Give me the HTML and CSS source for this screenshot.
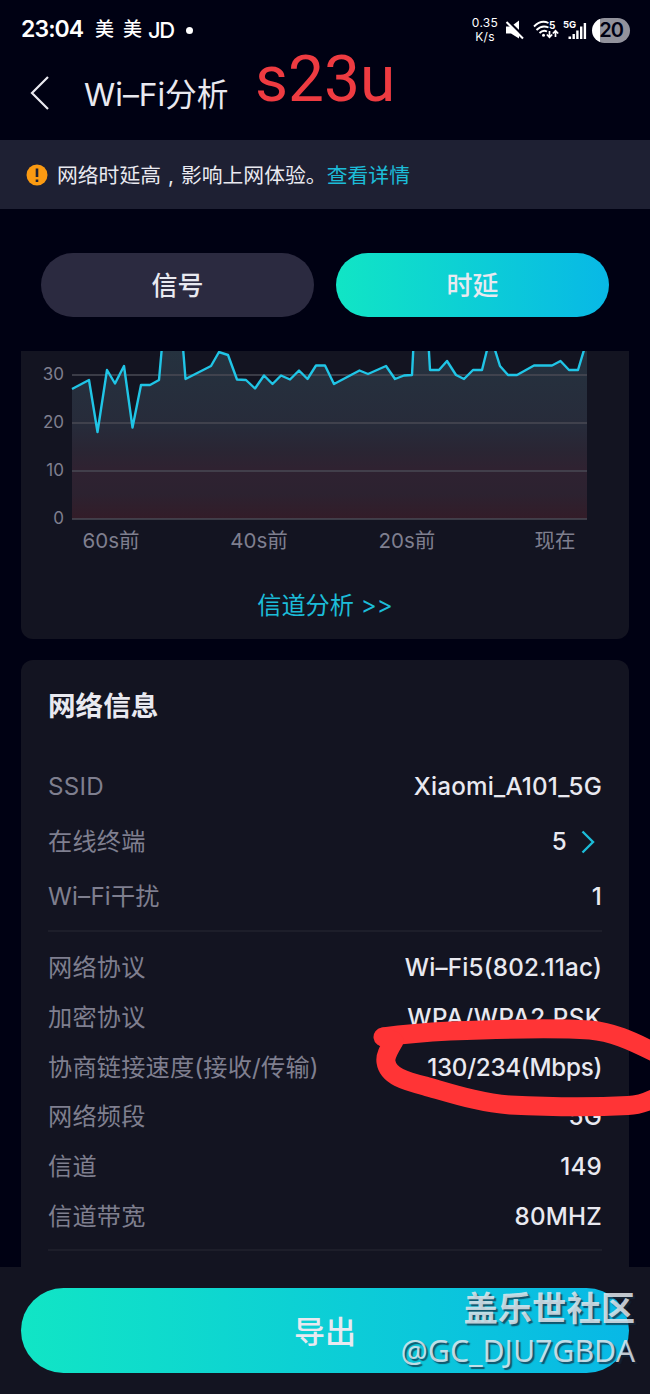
FILE: index.html
```html
<!DOCTYPE html>
<html lang="zh-CN">

<head>
  <meta charset="UTF-8" />
  <meta name="viewport" content="width=device-width, initial-scale=1.0" />
  <title>Wi-Fi分析</title>
  <link rel="stylesheet" href="styles.css">
</head>

<body>
  <div class="screen">
    <div class="status-bar">
      <span class="clock">23:04</span>
      <span class="notif">美</span>
      <span class="notif">美</span>
      <span class="notif-jd">JD</span>
      <span class="dot"></span>
      <div class="status-right">
        <div class="net-speed"><span>0.35</span><span>K/s</span></div>
        <svg class="mute" width="20" height="22" viewBox="0 0 20 22">
          <path d="M1 7.500h5l8-6v18l-8-5H1z" fill="#fff" />
          <path d="M1.500 0.500l18 17.500" stroke="#000113" stroke-width="2.500" />
          <path d="M1.500 3l16.500 16.500" stroke="#fff" stroke-width="2" />
        </svg>
        <svg class="wifi" width="26" height="22" viewBox="0 0 26 22">
          <g fill="none" stroke="#fff" stroke-width="1.9">
            <path d="M1 7.500Q8 0.500 15.500 4" />
            <path d="M3.500 11Q9 5.500 15.500 8.500" />
            <path d="M6.500 14Q10 10.500 14 12.500" />
            <path d="M16.500 12v6M13.800 15.500l2.700 2.700 2.700-2.700M22.500 18v-6M19.800 14.500l2.700-2.700 2.700 2.700" stroke-width="1.700" />
          </g>
          <circle cx="10.500" cy="16.300" r="1.500" fill="#fff" />
          <text x="16" y="9.500">5</text>
        </svg>
        <svg class="signal" width="24" height="22" viewBox="0 0 24 22">
          <text x="0" y="9">5G</text>
          <path d="M5.500 17.500h2.600V20H5.500zM9.500 15h2.400v5H9.500zM13.200 11.500h2.400V20h-2.400zM17 7.500h2.400V20H17zM20.700 4h2.400v16h-2.400z" fill="#fff" />
        </svg>
        <div class="battery">20</div>
      </div>
    </div>

    <header>
      <svg class="back" width="20" height="36" viewBox="0 0 20 36">
        <path d="M18 2L2 18l16 16" fill="none" stroke="#e9e9f0" stroke-width="2.200" />
      </svg>
      <h1>Wi–Fi分析</h1>
      <span class="scribble">s23u</span>
    </header>

    <div class="notice">
      <svg width="22" height="22" viewBox="0 0 22 22">
        <circle cx="11" cy="11" r="10.500" fill="#fb9a12" />
        <path d="M11 4.500v8.500M11 15.500v2.500" stroke="#1e2033" stroke-width="2.600" />
      </svg>
      <p>网络时延高<i>,</i>影响上网体验<i class="stop">。</i><a href="#">查看详情</a></p>
    </div>

    <div class="tabs">
      <button>信号</button>
      <button class="active">时延</button>
    </div>

    <main>
      <section class="card chart-card">
        <svg class="chart" width="608" height="210" viewBox="21 351 608 210">
          <defs>
            <linearGradient id="area" x1="0" y1="351" x2="0" y2="519" gradientUnits="userSpaceOnUse">
              <stop offset="0" stop-color="#25323f" />
              <stop offset="0.450" stop-color="#272b3a" />
              <stop offset="0.600" stop-color="#2a2533" />
              <stop offset="0.700" stop-color="#2f2231" />
              <stop offset="0.850" stop-color="#2c2230" />
              <stop offset="1" stop-color="#331c28" />
            </linearGradient>
          </defs>
          <path fill="url(#area)" d="M72 519V389L89 380 97.500 432 107 370 115 383.500 124 366 132.500 427.500 141 385 150 385 159 380 163 335 182 335 185.500 379 211 366 219 352 228 355 237 379.500 246 380 255 388.500 264 375.500 272.500 384 281 375.500 290 379.500 299 370.500 307.500 379 316 365.500 325 365.500 334 384 359.500 370.500 368 374 386 366 395 379 404 375.500 412 375 414 335 428 335 430 370 439 370 447 361 456 375 464 379 473 370 482 370 487 350 491 335 495 350 500 366 508 375 517 375 534 365.500 552 365.500 560.500 361 569 370 578 370 584 350 587 340V519z" />
          <path class="grid" d="M72 375H587M72 423H587M72 471H587M72 519H587" />
          <path class="line" d="M72 389L89 380 97.500 432 107 370 115 383.500 124 366 132.500 427.500 141 385 150 385 159 380 163 335M182 335L185.500 379 211 366 219 352 228 355 237 379.500 246 380 255 388.500 264 375.500 272.500 384 281 375.500 290 379.500 299 370.500 307.500 379 316 365.500 325 365.500 334 384 359.500 370.500 368 374 386 366 395 379 404 375.500 412 375 414 335M428 335L430 370 439 370 447 361 456 375 464 379 473 370 482 370 487 350 491 335 495 350 500 366 508 375 517 375 534 365.500 552 365.500 560.500 361 569 370 578 370 584 350 587 340" />
          <g class="y-labels">
            <text x="64" y="380">30</text>
            <text x="64" y="428">20</text>
            <text x="64" y="476">10</text>
            <text x="64" y="524">0</text>
          </g>
          <g class="x-labels">
            <text x="111" y="547.500">60s前</text>
            <text x="259" y="547.500">40s前</text>
            <text x="407" y="547.500">20s前</text>
            <text x="555" y="547.500">现在</text>
          </g>
        </svg>
        <a class="channel-link" href="#">信道分析 &gt;&gt;</a>
      </section>

      <section class="card info-card">
        <h2>网络信息</h2>
        <dl class="main-info">
          <div><dt>SSID</dt><dd>Xiaomi_A101_5G</dd></div>
          <div>
            <dt>在线终端</dt>
            <dd class="more">5
              <svg width="14" height="24" viewBox="0 0 14 24">
                <path d="M1.500 1.500L12 12 1.500 22.500" fill="none" stroke="#1cbcd8" stroke-width="2.400" />
              </svg>
            </dd>
          </div>
          <div><dt>Wi–Fi干扰</dt><dd>1</dd></div>
        </dl>
        <dl class="detail-info">
          <div><dt>网络协议</dt><dd>Wi–Fi5(802.11ac)</dd></div>
          <div><dt>加密协议</dt><dd class="cipher">WPA/WPA2 PSK</dd></div>
          <div><dt>协商链接速度(接收/传输)</dt><dd class="speed">130/234(Mbps)</dd></div>
          <div><dt>网络频段</dt><dd>5G</dd></div>
          <div><dt>信道</dt><dd>149</dd></div>
          <div><dt>信道带宽</dt><dd>80MHZ</dd></div>
        </dl>
        <!-- hand drawn circle round the link speed -->
        <svg class="marker" width="280" height="110" viewBox="370 1016 280 110">
          <path d="M383 1037C405 1034 430 1032 450 1031C500 1029 560 1028 590 1030C612 1032 630 1040 654 1052" />
          <path d="M384 1037L394 1041C388 1051 385 1056 386 1062C388 1076 405 1081 425 1086C450 1093 480 1103 510 1105C550 1107 600 1107 628 1105.500Q640 1105 654 1098.500" />
        </svg>
      </section>
    </main>

    <footer>
      <button class="export-btn">导出</button>
      <div class="watermark">
        <strong>盖乐世社区</strong>
        <span>@GC_DJU7GBDA</span>
      </div>
    </footer>
  </div>
</body>

</html>
```
FILE: styles.css
```css
* {
  box-sizing: border-box;
  margin: 0;
  padding: 0;
}

body {
  background-color: #000113;
  color: #e9e9f0;
  font-family: Inter, 'Noto Sans CJK SC', sans-serif;
  line-height: 1.2;
}

a {
  color: #1cbcd8;
  text-decoration: none;
}

button {
  border: none;
  font-family: inherit;
  line-height: 1.2;
  color: #e9e9f0;
}

.screen {
  width: 650px;
  height: 1394px;
  display: flex;
  flex-direction: column;
  overflow: hidden;
}

.status-bar {
  height: 58px;
  padding: 2px 20px 0 21px;
  display: flex;
  align-items: center;
  color: #fff;
}

.clock {
  width: 74px;
  font-size: 23px;
  font-weight: 600;
  letter-spacing: -0.9px;
}

.notif {
  width: 28px;
  font-size: 19px;
  font-weight: 500;
}

.notif-jd {
  width: 38px;
  margin-left: -3px;
  font-size: 22px;
  font-weight: 500;
  letter-spacing: -1.5px;
}

.dot {
  width: 7px;
  height: 7px;
  border-radius: 50%;
  background-color: #fff;
}

.status-right {
  margin-left: auto;
  display: flex;
  align-items: center;
}

.net-speed {
  width: 28px;
  margin-right: 6px;
  display: flex;
  flex-direction: column;
  align-items: center;
  font-size: 12px;
  line-height: 14px;
  letter-spacing: 0.3px;
}

.mute {
  margin-right: 8px;
}

.wifi {
  margin-right: 4px;
}

.wifi text {
  font-size: 10px;
  font-weight: 700;
  fill: #fff;
}

.signal {
  margin-right: 5px;
}

.signal text {
  font-size: 9.5px;
  font-weight: 700;
  fill: #fff;
}

.battery {
  width: 38px;
  height: 25px;
  border-radius: 13px;
  background: linear-gradient(90deg, #fff 8px, #92929c 8px);
  color: #000113;
  font-size: 20px;
  font-weight: 600;
  line-height: 25px;
  text-align: center;
  letter-spacing: -1px;
}

header {
  height: 82px;
  padding: 0 0 12px 30px;
  display: flex;
  align-items: center;
}

.back {
  margin-right: 34px;
}

h1 {
  width: 171px;
  padding-top: 4px;
  font-size: 31.7px;
  font-weight: 400;
  white-space: nowrap;
}

.scribble {
  color: #ee3b41;
  font-family: Roboto, sans-serif;
  font-size: 64px;
  line-height: 70px;
  margin-top: -27px;
}

.notice {
  height: 69px;
  padding-left: 26px;
  background-color: #1e2033;
  display: flex;
  align-items: center;
}

.notice p {
  margin-left: 9px;
  padding-top: 3px;
  font-size: 20.8px;
  display: flex;
}

.notice i {
  width: 20px;
  font-style: normal;
  padding-left: 7px;
}

.notice .stop {
  width: 21px;
  padding-left: 0;
}

.tabs {
  height: 142px;
  padding: 44px 41px 0;
  display: flex;
  gap: 22px;
}

.tabs button {
  flex: 1;
  height: 64px;
  padding-top: 2px;
  border-radius: 32px;
  background-color: #2b2a40;
  font-size: 26px;
  font-weight: 500;
}

.tabs .active {
  background: linear-gradient(90deg, #11e5c5, #08b8e6);
}

main {
  height: 916px;
  padding: 0 21px;
  overflow: hidden;
}

.card {
  background-color: #131421;
  border-radius: 12px;
}

.chart-card {
  height: 288px;
  border-radius: 0 0 12px 12px;
  margin-bottom: 21px;
  display: flex;
  flex-direction: column;
  align-items: center;
}

.chart text {
  fill: #7f7f8f;
}

.grid {
  stroke: #4a4954;
  stroke-width: 1.4;
}

.line {
  fill: none;
  stroke: #20c5e6;
  stroke-width: 2.4;
  stroke-linejoin: round;
}

.y-labels {
  font-size: 17px;
  text-anchor: end;
}

.x-labels {
  font-size: 20.5px;
  text-anchor: middle;
}

.channel-link {
  margin-top: 27px;
  font-size: 24.2px;
  line-height: 36px;
}

.info-card {
  position: relative;
  height: 650px;
  padding: 0 27px;
}

h2 {
  height: 98px;
  padding-top: 26px;
  font-size: 27.6px;
  line-height: 40px;
  font-weight: 700;
}

dl div {
  display: flex;
  align-items: center;
  justify-content: space-between;
  font-size: 24.2px;
  white-space: nowrap;
}

dt {
  color: #7f7f8f;
  letter-spacing: 0.2px;
}

dd {
  font-weight: 450;
  letter-spacing: 0.2px;
}

.main-info {
  height: 174px;
  padding-top: 1px;
  border-bottom: 2px solid #1d1e2a;
}

.main-info div {
  height: 55px;
}

.more {
  display: flex;
  align-items: center;
  gap: 14px;
  padding-right: 7px;
}

.detail-info {
  padding-top: 11px;
  height: 319px;
  border-bottom: 2px solid #1d1e2a;
}

.detail-info div {
  height: 49.7px;
}

.speed {
  letter-spacing: -0.3px;
}

.cipher {
  letter-spacing: 0.5px;
}

.marker {
  position: absolute;
  left: 349px;
  top: 356px;
}

.marker path {
  fill: none;
  stroke: #ff3436;
  stroke-width: 19;
  stroke-linecap: round;
  stroke-linejoin: round;
}

footer {
  position: relative;
  height: 127px;
  padding: 21px;
  background-color: #131421;
}

.export-btn {
  width: 100%;
  height: 85px;
  padding-top: 2px;
  border-radius: 43px;
  background: linear-gradient(90deg, #11e5c5, #08b8e6);
  font-size: 31px;
  font-weight: 500;
}

.watermark {
  position: absolute;
  right: 15px;
  top: 18px;
  display: flex;
  flex-direction: column;
  align-items: flex-end;
  color: rgba(225, 230, 236, 0.85);
  font-family: 'Noto Sans', 'Noto Sans CJK SC', sans-serif;
  text-shadow: 2px 2px 1px rgba(20, 40, 60, 0.7);
}

.watermark strong {
  font-size: 34.3px;
  line-height: 46px;
  font-weight: 700;
}

.watermark span {
  font-size: 30.3px;
  line-height: 40px;
}
```
